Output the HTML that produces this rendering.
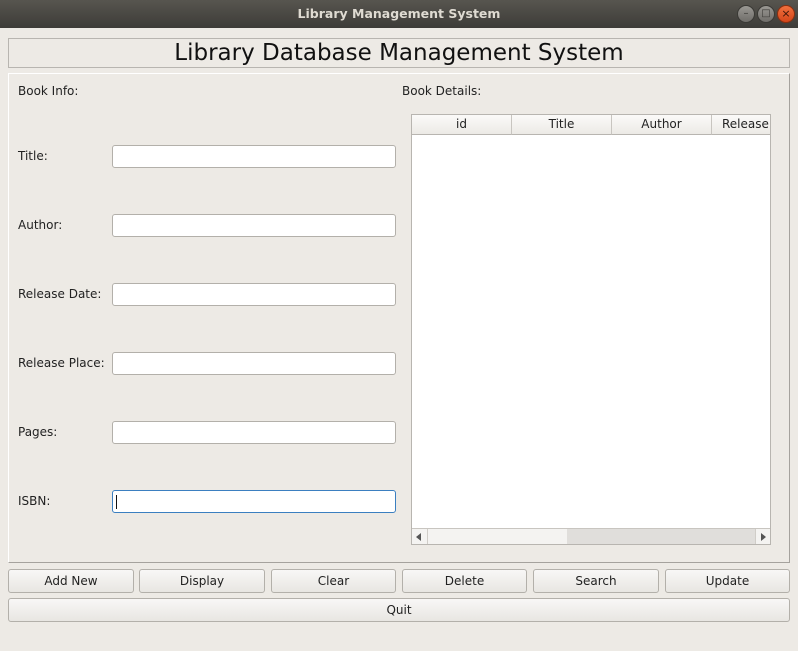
<!DOCTYPE html>
<html><head><meta charset="utf-8"><style>
*{box-sizing:border-box;margin:0;padding:0}
body{width:798px;height:651px;background:#edeae5;font-family:"DejaVu Sans","Liberation Sans",sans-serif;font-size:12px;color:#222;position:relative;overflow:hidden}
.abs{position:absolute}
.tb{left:0;top:0;width:798px;height:28px;background:linear-gradient(#57554f,#3d3c38);color:#dfdbd2;font-weight:bold;font-size:12.5px;text-align:center;line-height:28px}
.wb{width:18px;height:18px;border-radius:50%;top:5px;background:linear-gradient(#9a9893,#6f6d69);border:1px solid #3a3935;color:#3a3935;font-size:10px;text-align:center;line-height:16px}
.hdr{left:8px;top:38px;width:782px;height:30px;border:1px solid #b8b5b0;font-size:23px;text-align:center;line-height:28px;color:#111}
.main{left:8px;top:73px;width:782px;height:490px;border-top:1px solid #fff;border-left:1px solid #fff;border-right:1px solid #a5a29d;border-bottom:1px solid #a5a29d}
.lbl{left:18px}
.in{left:112px;width:284px;height:23px;background:#fff;border:1px solid #b3b0aa;border-radius:3px}
.tbl{left:411px;top:114px;width:360px;height:431px;background:#fff;border:1px solid #b8b5b0}
.th{top:0;height:20px;background:linear-gradient(#fbfaf9,#eceae6);border-right:1px solid #c8c5c0;border-bottom:1px solid #b8b5b0;text-align:center;line-height:19px}
.btn{height:24px;top:569px;width:126px;border:1px solid #b3b0aa;border-radius:3px;background:linear-gradient(#f8f7f6,#e8e6e2);text-align:center;line-height:22px}
</style></head><body>
<div class="abs tb">Library Management System</div>
<div class="abs wb" style="left:737px">–</div>
<div class="abs wb" style="left:757px">□</div>
<div class="abs wb" style="left:777px;background:linear-gradient(#f0703e,#d4461a);border-color:#8a2f10;color:#3a1408;font-size:11px">×</div>
<div class="abs hdr">Library Database Management System</div>
<div class="abs main"></div>
<div class="abs lbl" style="top:84px">Book Info:</div>
<div class="abs" style="left:402px;top:84px">Book Details:</div>
<div class="abs lbl" style="top:149px">Title:</div><div class="abs in" style="top:145px"></div>
<div class="abs lbl" style="top:218px">Author:</div><div class="abs in" style="top:214px"></div>
<div class="abs lbl" style="top:287px">Release Date:</div><div class="abs in" style="top:283px"></div>
<div class="abs lbl" style="top:356px">Release Place:</div><div class="abs in" style="top:352px"></div>
<div class="abs lbl" style="top:425px">Pages:</div><div class="abs in" style="top:421px"></div>
<div class="abs lbl" style="top:494px">ISBN:</div><div class="abs in" style="top:490px;border-color:#3b7fc0"><div class="abs" style="left:3px;top:4px;width:1px;height:14px;background:#111"></div></div>
<div class="abs tbl">
<div class="abs th" style="left:0;width:100px">id</div>
<div class="abs th" style="left:100px;width:100px">Title</div>
<div class="abs th" style="left:200px;width:100px">Author</div>
<div class="abs th" style="left:300px;width:58px;border-right:none;text-align:left;padding-left:10px;overflow:hidden;white-space:nowrap">Release</div>
<div class="abs" style="left:0;top:413px;width:358px;height:16px;border-top:1px solid #c8c5c0;background:#f4f3f1">
<div class="abs" style="left:4px;top:4px;width:0;height:0;border-top:4px solid transparent;border-bottom:4px solid transparent;border-right:5px solid #555"></div>
<div class="abs" style="left:15px;top:0;width:1px;height:15px;background:#d0cdc8"></div>
<div class="abs" style="left:155px;top:0;width:188px;height:15px;background:#e0dedb"></div>
<div class="abs" style="left:343px;top:0;width:1px;height:15px;background:#d0cdc8"></div>
<div class="abs" style="left:349px;top:4px;width:0;height:0;border-top:4px solid transparent;border-bottom:4px solid transparent;border-left:5px solid #555"></div>
</div>
</div>
<div class="abs btn" style="left:8px">Add New</div>
<div class="abs btn" style="left:139px">Display</div>
<div class="abs btn" style="left:271px;width:125px">Clear</div>
<div class="abs btn" style="left:402px;width:125px">Delete</div>
<div class="abs btn" style="left:533px">Search</div>
<div class="abs btn" style="left:665px;width:125px">Update</div>
<div class="abs btn" style="left:8px;top:598px;width:782px">Quit</div>
</body></html>
